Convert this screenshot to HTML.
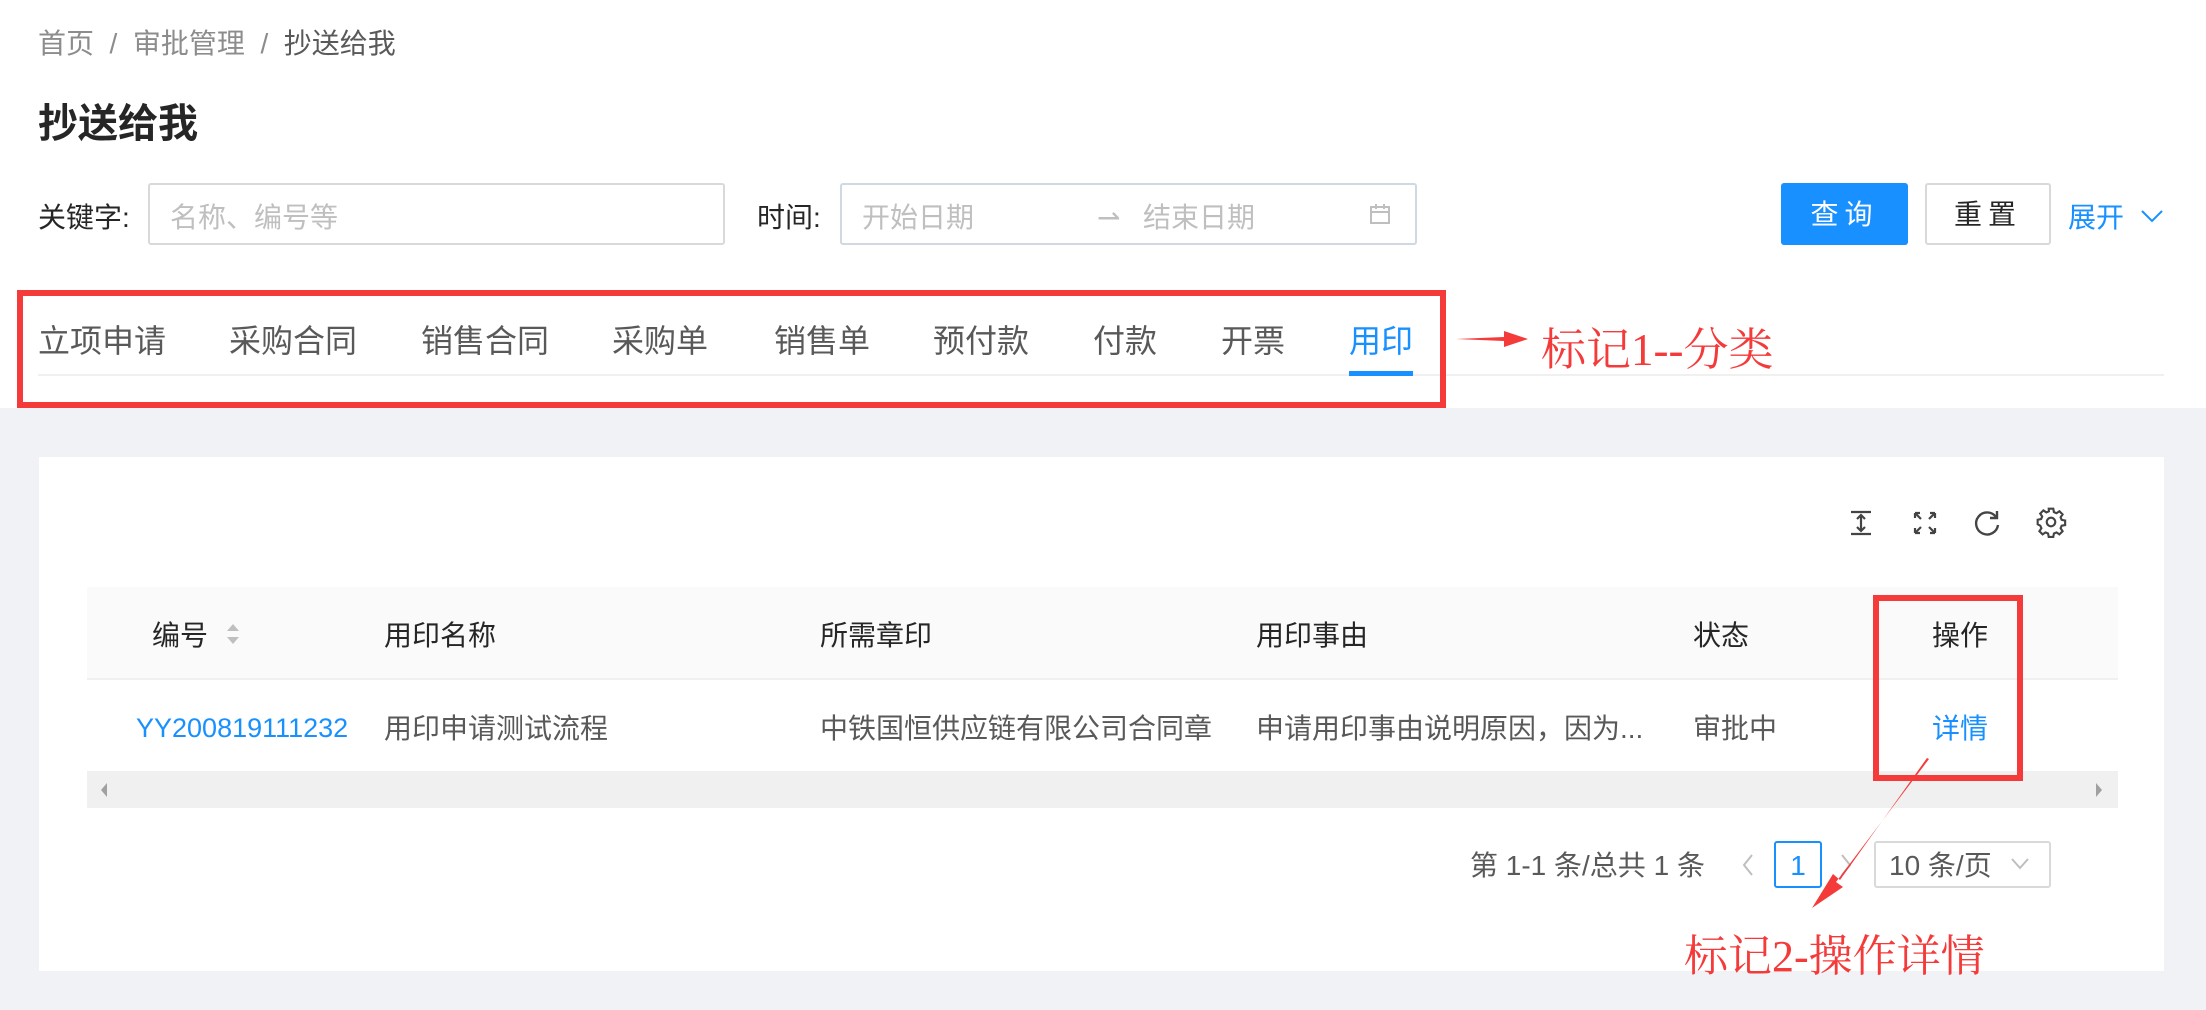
<!DOCTYPE html>
<html><head><meta charset="utf-8"><style>
*{margin:0;padding:0;box-sizing:border-box}
body{width:2206px;height:1010px;position:relative;background:#fff;font-family:"Liberation Sans","Noto Sans CJK SC",sans-serif;color:#262626;overflow:hidden}
.a{position:absolute;white-space:nowrap;line-height:1}
.f{font-size:28px}
.ph{color:#bfbfbf}
</style></head><body>
<div class="a" style="left:0;top:408px;width:2206px;height:602px;background:#f0f2f5"></div>

<div class="a f" style="left:38px;top:30px;color:#8c8c8c">首页 &nbsp;/&nbsp; 审批管理 &nbsp;/&nbsp; <span style="color:#595959">抄送给我</span></div>
<div class="a" style="left:38px;top:104px;font-size:40px;font-weight:bold;color:#262626">抄送给我</div>

<div class="a f" style="left:38px;top:204px;color:#262626">关键字:</div>
<div class="a" style="left:148px;top:183px;width:577px;height:62px;border:2px solid #d9d9d9;border-radius:3px"></div>
<div class="a f ph" style="left:170px;top:204px">名称、编号等</div>
<div class="a f" style="left:757px;top:204px">时间:</div>
<div class="a" style="left:840px;top:183px;width:577px;height:62px;border:2px solid #cfd8e3;border-radius:3px"></div>
<div class="a f ph" style="left:862px;top:204px">开始日期</div>
<div class="a f ph" style="left:1097px;top:204px">⇀</div>
<div class="a f ph" style="left:1143px;top:204px">结束日期</div>
<svg class="a" style="left:1368px;top:202px" width="24" height="24" viewBox="0 0 24 24" fill="none" stroke="#bfbfbf" stroke-width="2"><rect x="3" y="5" width="18" height="16"/><path d="M3 10h18M8 2v5M16 2v5"/></svg>

<div class="a" style="left:1781px;top:183px;width:127px;height:62px;background:#1890ff;border-radius:3px;color:#fff;font-size:28px;text-align:center;line-height:64px;letter-spacing:6px">查询</div>
<div class="a" style="left:1925px;top:183px;width:126px;height:62px;border:2px solid #d9d9d9;border-radius:3px;font-size:28px;text-align:center;line-height:60px;letter-spacing:6px">重置</div>
<div class="a f" style="left:2068px;top:204px;color:#1890ff">展开</div>
<svg class="a" style="left:2140px;top:206px" width="24" height="20" viewBox="0 0 24 20" fill="none" stroke="#1890ff" stroke-width="2"><path d="M2 5l10 10 10-10"/></svg>

<div class="a" style="left:38px;top:325px;font-size:32px;color:#595959">
<span class="a" style="left:0">立项申请</span><span class="a" style="left:191px">采购合同</span><span class="a" style="left:383px">销售合同</span><span class="a" style="left:574px">采购单</span><span class="a" style="left:736px">销售单</span><span class="a" style="left:895px">预付款</span><span class="a" style="left:1055px">付款</span><span class="a" style="left:1183px">开票</span><span class="a" style="left:1311px;color:#1890ff">用印</span></div>
<div class="a" style="left:38px;top:374px;width:2126px;height:2px;background:#f0f0f0"></div>
<div class="a" style="left:1349px;top:371px;width:64px;height:5px;background:#1890ff"></div>
<div class="a" style="left:17px;top:290px;width:1429px;height:118px;border:6px solid #f53a3a"></div>
<svg class="a" style="left:1454px;top:328px" width="76" height="22"><path d="M2 11L50 9L50 3L74 11L50 19L50 13Z" fill="#f53a3a"/></svg>
<div class="a" style="left:1541px;top:328px;font-size:45px;color:#f53a3a;font-family:'Liberation Serif','Noto Serif CJK SC',serif">标记1--分类</div>

<div class="a" style="left:39px;top:457px;width:2125px;height:514px;background:#fff"></div>
<svg class="a" style="left:1847px;top:509px" width="28" height="28" viewBox="0 0 28 28" fill="none" stroke="#444" stroke-width="2.2"><path d="M4 3h20M4 25h20M14 6v16M10 10l4-4 4 4M10 18l4 4 4-4"/></svg>
<svg class="a" style="left:1912px;top:510px" width="26" height="26" viewBox="0 0 26 26" fill="none" stroke="#444" stroke-width="2.2"><path d="M3 3l6 6M3 3v5M3 3h5M23 3l-6 6M23 3v5M23 3h-5M3 23l6-6M3 23v-5M3 23h5M23 23l-6-6M23 23v-5M23 23h-5"/></svg>
<svg class="a" style="left:1972px;top:508px" width="30" height="30" viewBox="0 0 30 30" fill="none" stroke="#444" stroke-width="2.4"><path d="M24 9A11 11 0 1 0 26 17"/><path d="M25 3v7h-7"/></svg>
<svg class="a" style="left:2035px;top:506px" width="32" height="32" viewBox="0 0 24 24" fill="none" stroke="#444" stroke-width="1.6"><circle cx="12" cy="12" r="3.2"/><path d="M10.3 2h3.4l.5 2.6 1.9.8 2.2-1.5 2.4 2.4-1.5 2.2.8 1.9 2.6.5v3.4l-2.6.5-.8 1.9 1.5 2.2-2.4 2.4-2.2-1.5-1.9.8-.5 2.6h-3.4l-.5-2.6-1.9-.8-2.2 1.5-2.4-2.4 1.5-2.2-.8-1.9L2 13.7v-3.4l2.6-.5.8-1.9-1.5-2.2 2.4-2.4 2.2 1.5 1.9-.8z"/></svg>

<div class="a" style="left:87px;top:587px;width:2031px;height:93px;background:#fafafa;border-bottom:2px solid #f0f0f0"></div>
<div class="a f" style="left:152px;top:622px">编号</div>
<svg class="a" style="left:225px;top:621px" width="16" height="26"><path d="M2 10L8 3L14 10Z M2 16L8 23L14 16Z" fill="#bfbfbf"/></svg>
<div class="a f" style="left:384px;top:622px">用印名称</div>
<div class="a f" style="left:820px;top:622px">所需章印</div>
<div class="a f" style="left:1256px;top:622px">用印事由</div>
<div class="a f" style="left:1693px;top:622px">状态</div>
<div class="a f" style="left:1932px;top:622px">操作</div>

<div class="a" style="left:136px;top:715px;color:#1890ff;font-size:27px">YY200819111232</div>
<div class="a f" style="left:384px;top:715px;color:#595959">用印申请测试流程</div>
<div class="a f" style="left:820px;top:715px;color:#595959">中铁国恒供应链有限公司合同章</div>
<div class="a f" style="left:1256px;top:715px;color:#595959">申请用印事由说明原因，因为...</div>
<div class="a f" style="left:1693px;top:715px;color:#595959">审批中</div>
<div class="a f" style="left:1932px;top:715px;color:#1890ff">详情</div>

<div class="a" style="left:87px;top:771px;width:2031px;height:37px;background:#f0f0f0"></div>
<svg class="a" style="left:99px;top:782px" width="10" height="16"><path d="M8 1L2 8L8 15Z" fill="#a0a0a0"/></svg>
<svg class="a" style="left:2094px;top:782px" width="10" height="16"><path d="M2 1L8 8L2 15Z" fill="#a0a0a0"/></svg>

<div class="a" style="left:1873px;top:595px;width:150px;height:186px;border:6px solid #f53a3a"></div>

<div class="a f" style="left:1470px;top:852px;color:#595959">第 1-1 条/总共 1 条</div>
<svg class="a" style="left:1741px;top:853px" width="14" height="24" fill="none" stroke="#bfbfbf" stroke-width="2"><path d="M11 2L3 12L11 22"/></svg>
<div class="a" style="left:1774px;top:841px;width:48px;height:47px;border:2px solid #1890ff;border-radius:3px;color:#1890ff;font-size:28px;text-align:center;line-height:45px">1</div>
<svg class="a" style="left:1839px;top:853px" width="14" height="24" fill="none" stroke="#bfbfbf" stroke-width="2"><path d="M3 2L11 12L3 22"/></svg>
<div class="a" style="left:1874px;top:841px;width:177px;height:47px;border:2px solid #d9d9d9;border-radius:3px"></div>
<div class="a f" style="left:1889px;top:852px;color:#595959">10 条/页</div>
<svg class="a" style="left:2010px;top:856px" width="20" height="16" fill="none" stroke="#bfbfbf" stroke-width="2"><path d="M2 3l8 9 8-9"/></svg>

<svg class="a" style="left:1800px;top:750px" width="140" height="165"><path d="M127 8L40 130L33 124L12 158L43 137L36 132L129 9Z" fill="#f53a3a"/></svg>
<div class="a" style="left:1684px;top:935px;font-size:44px;color:#f53a3a;font-family:'Liberation Serif','Noto Serif CJK SC',serif">标记2-操作详情</div>
</body></html>
